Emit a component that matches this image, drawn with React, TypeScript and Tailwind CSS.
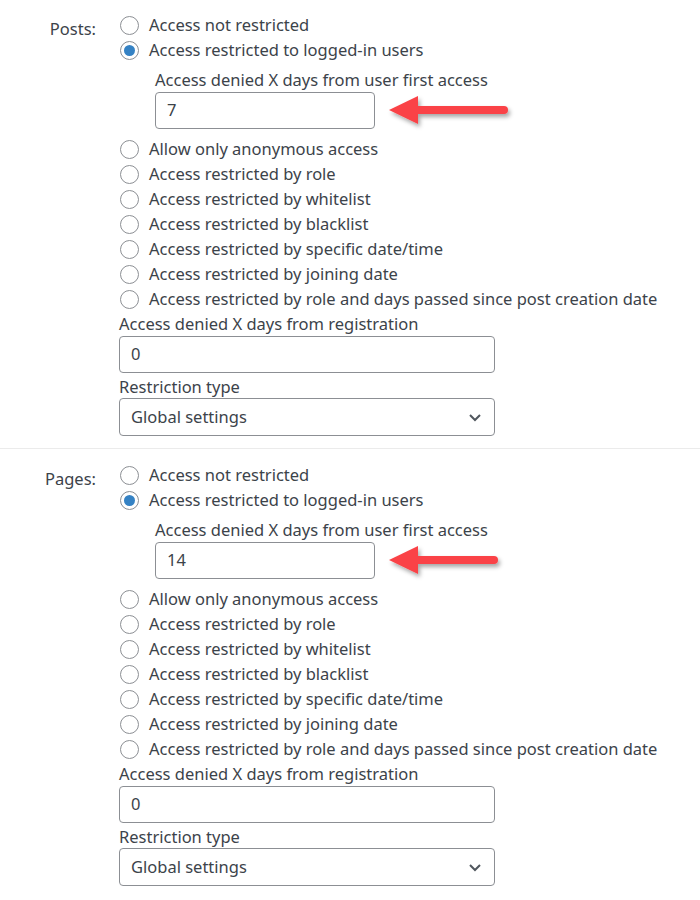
import React from "react";

const font = { fontFamily: '"Noto Sans", "Open Sans", sans-serif' };

function Radio({ checked, label }: { checked?: boolean; label: string }) {
  return (
    <div className="flex items-center h-[25px]">
      <span className="w-[19px] h-[19px] rounded-full border border-[#8c8f94] bg-white flex items-center justify-center shrink-0 ml-[1px]">
        {checked && <span className="w-[11px] h-[11px] rounded-full bg-[#3582c4]" />}
      </span>
      <span className="ml-[10px] whitespace-nowrap">{label}</span>
    </div>
  );
}

function Arrow({ len }: { len: number }) {
  return (
    <svg width={len + 14} height="44" viewBox={`0 0 ${len + 14} 44`} className="shrink-0">
      <defs>
        <filter id="sh" x="-20%" y="-40%" width="140%" height="180%">
          <feDropShadow dx="2" dy="3" stdDeviation="2" floodColor="#000" floodOpacity="0.35" />
        </filter>
      </defs>
      <g filter="url(#sh)">
        <line x1="28" y1="20" x2={len} y2="20" stroke="#fa4346" strokeWidth="8" strokeLinecap="round" />
        <polygon points="3,20 32,6 32,34" fill="#fa4346" />
      </g>
    </svg>
  );
}

function Section({ title, days, arrowLen, last }: { title: string; days: string; arrowLen: number; last?: boolean }) {
  const after = [
    "Allow only anonymous access",
    "Access restricted by role",
    "Access restricted by whitelist",
    "Access restricted by blacklist",
    "Access restricted by specific date/time",
    "Access restricted by joining date",
    "Access restricted by role and days passed since post creation date",
  ];
  return (
    <div className={`flex pb-[12px] ${last ? "pt-[14px]" : "pt-[13px] border-b border-[#ebebeb]"}`}>
      <div className="w-[96px] text-right pt-[4px] shrink-0">{title}</div>
      <div className="ml-[23px] flex flex-col">
        <Radio label="Access not restricted" />
        <Radio checked label="Access restricted to logged-in users" />
        <div className="pl-[36px] mt-[5px]">
          <div className="h-[24px] leading-[24px]">Access denied X days from user first access</div>
          <div className="flex items-center h-[37px]">
            <div className="w-[220px] h-[37px] border border-[#8c8f94] rounded-[4px] px-[11px] flex items-center">{days}</div>
            <div className="ml-[11px] mt-[2px] flex items-center h-[37px]"><Arrow len={arrowLen} /></div>
          </div>
        </div>
        <div className="mt-[8px]">
          {after.map((a) => (
            <Radio key={a} label={a} />
          ))}
        </div>
        <div className="h-[24px] leading-[24px]">Access denied X days from registration</div>
        <div className="w-[376px] h-[37px] border border-[#8c8f94] rounded-[4px] px-[11px] flex items-center">0</div>
        <div className="h-[23px] leading-[23px] mt-[2px]">Restriction type</div>
        <div className="w-[376px] h-[38px] border border-[#8c8f94] rounded-[4px] pl-[11px] pr-[12px] flex items-center justify-between">
          <span>Global settings</span>
          <svg width="14" height="9" viewBox="0 0 14 9">
            <polyline points="2,2 7,7 12,2" fill="none" stroke="#50575e" strokeWidth="2" />
          </svg>
        </div>
      </div>
    </div>
  );
}

export default function App() {
  return (
    <div className="w-[700px] h-[900px] bg-white text-[#3c434a] text-[16.5px] overflow-hidden" style={font}>
      <Section title="Posts:" days="7" arrowLen={118} />
      <Section title="Pages:" days="14" arrowLen={108} last />
    </div>
  );
}
